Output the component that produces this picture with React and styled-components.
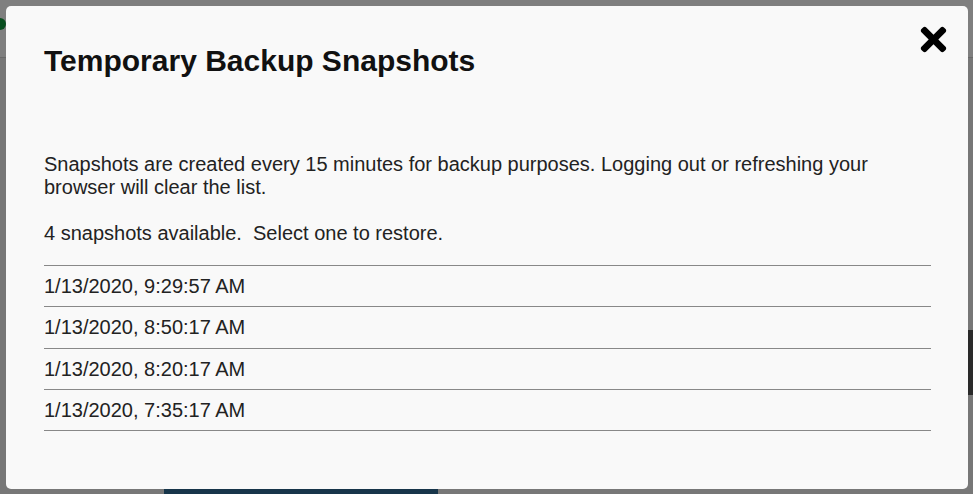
import React from 'react'
import styled, { createGlobalStyle } from 'styled-components'
import { FaTimes } from 'react-icons/fa'

const snapshots = [
  '1/13/2020, 9:29:57 AM',
  '1/13/2020, 8:50:17 AM',
  '1/13/2020, 8:20:17 AM',
  '1/13/2020, 7:35:17 AM',
]

const App = () => {
  return (
    <>
      <GlobalStyle />
      <Page>
        <Header>
          <StatusDot />
        </Header>
        <Main>
          <SideTab />
        </Main>
        <ActionBar>
          <ActionButton />
        </ActionBar>
      </Page>

      <Overlay>
        <Modal>
          <CloseButton aria-label="Close">
            <FaTimes size={37} />
          </CloseButton>
          <Title>Temporary Backup Snapshots</Title>
          <Intro>
            Snapshots are created every 15 minutes for backup purposes. Logging out or refreshing your
            browser will clear the list.
            <br />
            <br />
            {snapshots.length} snapshots available.&nbsp; Select one to restore.
          </Intro>
          <List>
            {snapshots.map((s) => (
              <Row key={s}>{s}</Row>
            ))}
          </List>
        </Modal>
      </Overlay>
    </>
  )
}

const GlobalStyle = createGlobalStyle`
    html, body {
        margin: 0;
        padding: 0;
        height: 100%;
        overflow: hidden;
    }
    body {
        font-family: "Liberation Sans", Arial, sans-serif;
        background: #eeeeee;
    }
`

const Page = styled.div`
    width: 973px;
    height: 494px;
    display: flex;
    flex-direction: column;
`

const Header = styled.div`
    height: 57px;
    background: #ffffff;
    border-bottom: 1px solid #d2d2d2;
    display: flex;
    align-items: center;
`

const StatusDot = styled.span`
    width: 12px;
    height: 12px;
    margin-left: -6px;
    margin-top: -10px;
    border-radius: 50%;
    background: #0f9a3c;
`

const Main = styled.div`
    height: 431px;
    display: flex;
    justify-content: flex-end;
    padding-top: 272px;
    box-sizing: border-box;
    background: #eeeeee;
`

const SideTab = styled.div`
    width: 8px;
    height: 65px;
    background: #555555;
`

const ActionBar = styled.div`
    flex: 1;
    display: flex;
    padding-left: 164px;
`

const ActionButton = styled.div`
    width: 274px;
    background: #2e6a94;
`

const Overlay = styled.div`
    position: fixed;
    inset: 0;
    background: rgba(0, 0, 0, 0.5);
    display: flex;
    padding: 6px 5px 5px 6px;
`

const Modal = styled.div`
    position: relative;
    flex: 1;
    background: #f9f9f9;
    border-radius: 5px;
    padding: 38px 37px 0 38px;
    color: #222222;
`

const CloseButton = styled.button`
    position: absolute;
    top: 15px;
    right: 16px;
    padding: 0;
    border: none;
    background: none;
    color: #000000;
    display: flex;
    cursor: pointer;
`

const Title = styled.h2`
    margin: 0;
    font-size: 30px;
    line-height: 34px;
    font-weight: bold;
    color: #111111;
`

const Intro = styled.p`
    margin: 74.5px 0 20.5px;
    font-size: 20px;
    line-height: 23px;
`

const List = styled.div`
    border-bottom: 1px solid #888888;
`

const Row = styled.div`
    border-top: 1px solid #888888;
    padding: 9px 0 8.25px;
    font-size: 20px;
    line-height: 23px;
    cursor: pointer;
`

export default App
